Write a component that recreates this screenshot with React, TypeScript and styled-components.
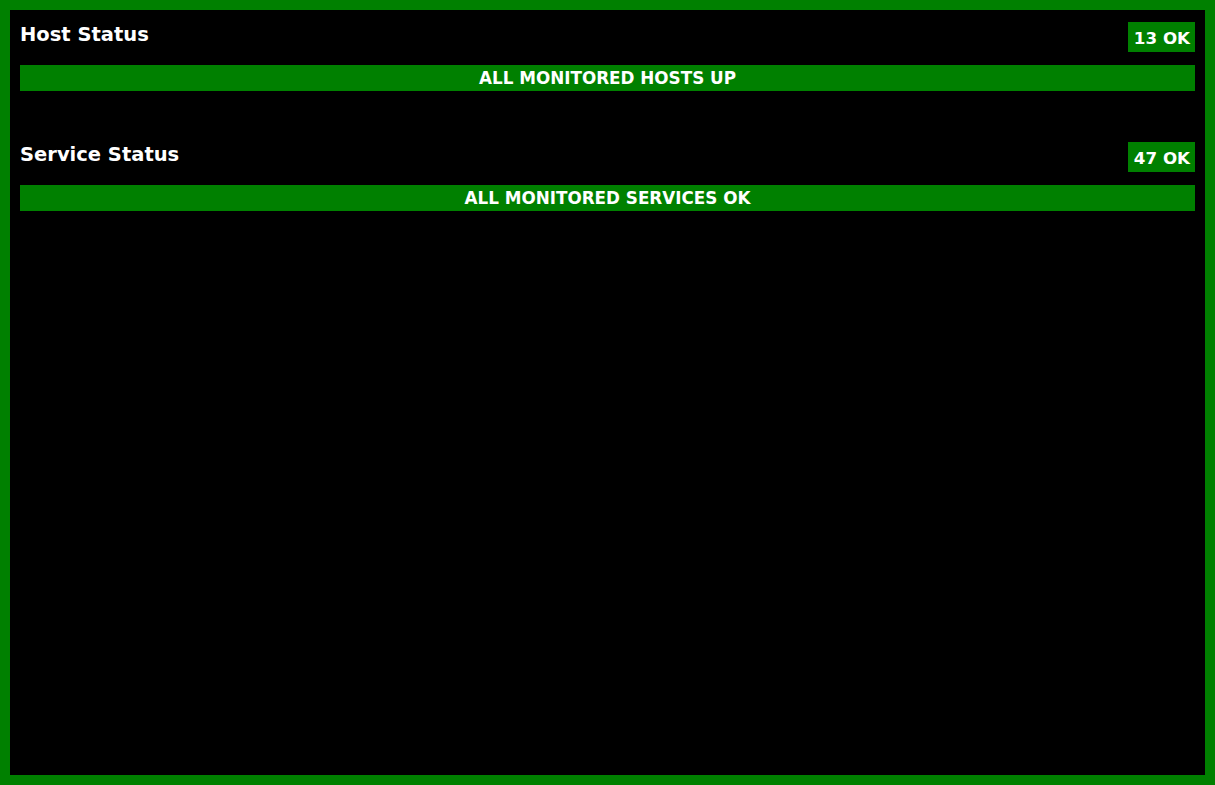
import styled, { createGlobalStyle } from "styled-components";

const GlobalStyle = createGlobalStyle`
  html, body {
    margin: 0;
    padding: 0;
    background-color: #008000;
  }
  body {
    font-family: "DejaVu Sans", Verdana, sans-serif;
  }
`;

const Frame = styled.div`
  box-sizing: border-box;
  width: 1215px;
  height: 785px;
  border: 10px solid #008000;
  background-color: #000000;
  padding: 10px;
  color: #ffffff;
`;

const Section = styled.section`
  margin-bottom: 49px;
`;

const Header = styled.div`
  display: flex;
  justify-content: space-between;
  align-items: flex-start;
  height: 45px;
`;

const Title = styled.h2`
  margin: 3px 0 0;
  font-size: 19.5px;
  font-weight: bold;
  line-height: 24px;
`;

const Badge = styled.div`
  box-sizing: border-box;
  margin-top: 2px;
  height: 30px;
  padding: 1px 5px 0 6px;
  display: flex;
  align-items: center;
  background-color: #008000;
  font-size: 16.7px;
  font-weight: bold;
`;

const Banner = styled.div`
  height: 26px;
  display: flex;
  align-items: center;
  justify-content: center;
  background-color: #008000;
  font-size: 16.8px;
  font-weight: bold;
`;

type StatusProps = {
  title: string;
  count: string;
  message: string;
};

function StatusBlock({ title, count, message }: StatusProps) {
  return (
    <Section>
      <Header>
        <Title>{title}</Title>
        <Badge>{count}</Badge>
      </Header>
      <Banner>{message}</Banner>
    </Section>
  );
}

export default function App() {
  return (
    <>
      <GlobalStyle />
      <Frame>
        <StatusBlock title="Host Status" count="13 OK" message="ALL MONITORED HOSTS UP" />
        <StatusBlock
          title="Service Status"
          count="47 OK"
          message="ALL MONITORED SERVICES OK"
        />
      </Frame>
    </>
  );
}
